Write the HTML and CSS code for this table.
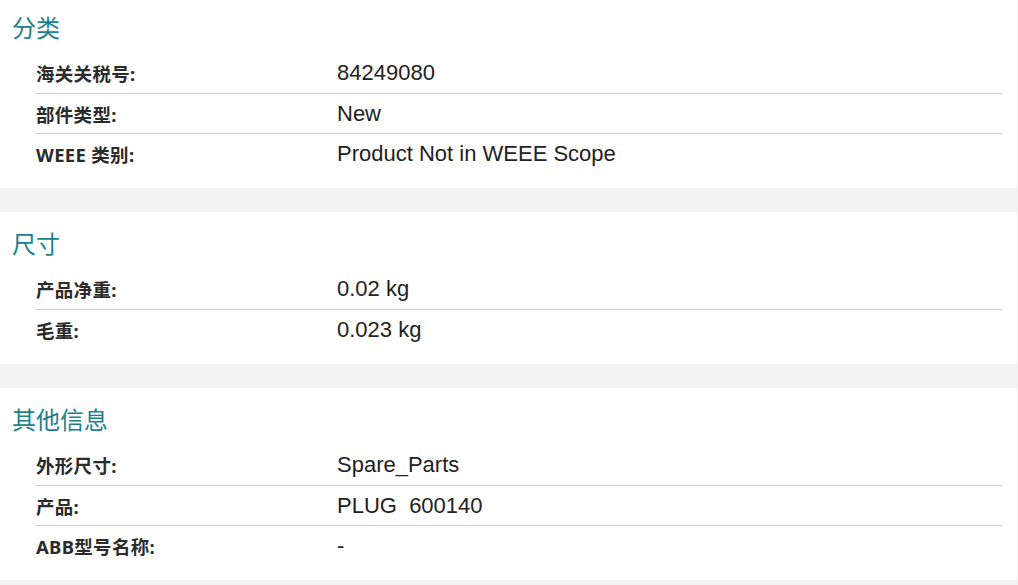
FILE: index.html
```html
<!DOCTYPE html>
<html lang="zh-CN">
<head>
<meta charset="utf-8">
<title>产品信息</title>
<link rel="stylesheet" href="styles.css">
</head>
<body>
<main class="page">
  <section class="card card-first">
    <h2 class="card-title">分类</h2>
    <dl class="spec-list">
      <div class="spec-row"><dt>海关关税号:</dt><dd>84249080</dd></div>
      <div class="spec-row"><dt>部件类型:</dt><dd>New</dd></div>
      <div class="spec-row"><dt>WEEE 类别:</dt><dd>Product Not in WEEE Scope</dd></div>
    </dl>
  </section>
  <section class="card">
    <h2 class="card-title">尺寸</h2>
    <dl class="spec-list">
      <div class="spec-row"><dt>产品净重:</dt><dd>0.02 kg</dd></div>
      <div class="spec-row"><dt>毛重:</dt><dd>0.023 kg</dd></div>
    </dl>
  </section>
  <section class="card">
    <h2 class="card-title">其他信息</h2>
    <dl class="spec-list">
      <div class="spec-row"><dt>外形尺寸:</dt><dd>Spare_Parts</dd></div>
      <div class="spec-row"><dt>产品:</dt><dd>PLUG  600140</dd></div>
      <div class="spec-row"><dt>ABB型号名称:</dt><dd>-</dd></div>
    </dl>
  </section>
</main>
</body>
</html>
```

FILE: styles.css
```css
html, body {
  margin: 0;
  padding: 0;
}

body {
  background: #f2f2f2;
  font-family: "Noto Sans CJK SC", "Noto Sans", sans-serif;
  color: #262626;
}

.page {
  width: 1017px;
  display: flex;
  flex-direction: column;
  gap: 24px;
  padding-bottom: 5px;
}

.card {
  background: #ffffff;
  padding: 0 15px 15px 0;
}

.card-first {
  margin-top: -4px;
}

.card-title {
  margin: 0;
  padding: 16px 12px 11px;
  font-size: 24px;
  line-height: 30px;
  font-weight: 400;
  color: #1b7f8c;
}

.spec-list {
  margin: 0;
  padding: 0 0 0 36px;
}

.spec-row {
  display: flex;
  align-items: center;
  height: 40px;
  box-sizing: border-box;
  border-top: 1px solid #cccccc;
}

.spec-row:first-child {
  border-top: 0;
}

.spec-row dt {
  width: 301px;
  flex: none;
  font-family: "Noto Sans", "Noto Sans CJK SC", sans-serif;
  font-size: 18.5px;
  font-weight: 700;
  letter-spacing: 0.3px;
  color: #2b2b2b;
}

.spec-row dd {
  margin: 0;
  font-family: "Liberation Sans", Arial, sans-serif;
  font-size: 22px;
  white-space: pre;
  color: #222222;
}
```
